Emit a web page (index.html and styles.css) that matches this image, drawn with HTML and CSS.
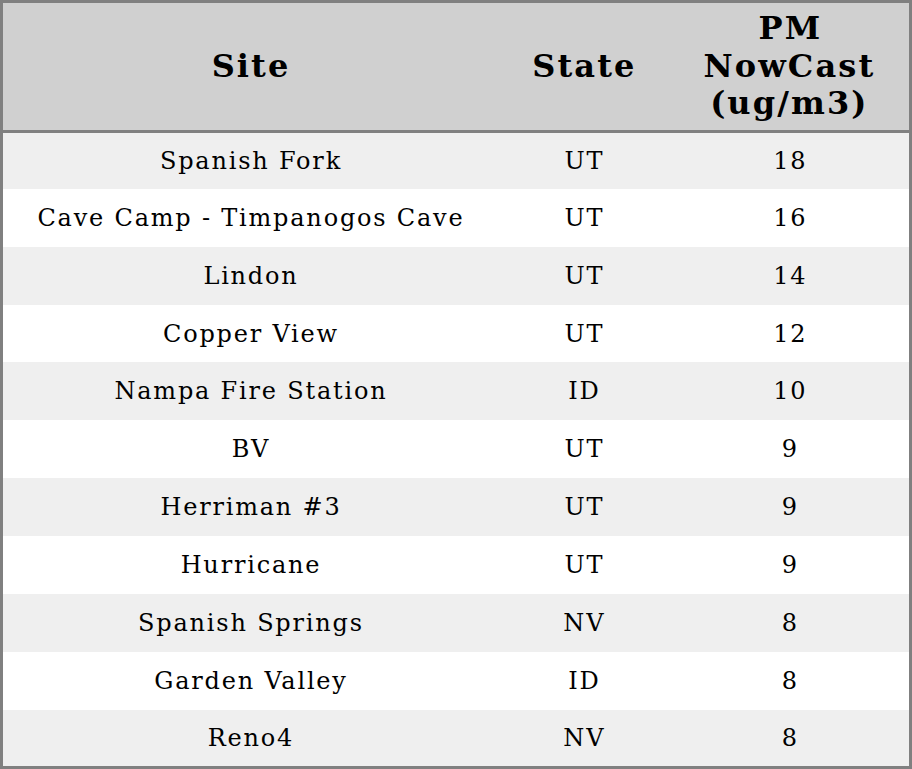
FILE: index.html
```html
<!DOCTYPE html>
<html>
<head>
<meta charset="utf-8">
<link rel="stylesheet" href="styles.css">
</head>
<body>
<table class="aq">
  <colgroup>
    <col class="c-site">
    <col class="c-state">
    <col class="c-pm">
  </colgroup>
  <thead>
    <tr class="head">
      <th>Site</th>
      <th>State</th>
      <th>PM<br>NowCast<br>(ug/m3)</th>
    </tr>
  </thead>
  <tbody>
    <tr><td>Spanish Fork</td><td>UT</td><td>18</td></tr>
    <tr><td>Cave Camp - Timpanogos Cave</td><td>UT</td><td>16</td></tr>
    <tr><td>Lindon</td><td>UT</td><td>14</td></tr>
    <tr><td>Copper View</td><td>UT</td><td>12</td></tr>
    <tr><td>Nampa Fire Station</td><td>ID</td><td>10</td></tr>
    <tr><td>BV</td><td>UT</td><td>9</td></tr>
    <tr><td>Herriman #3</td><td>UT</td><td>9</td></tr>
    <tr><td>Hurricane</td><td>UT</td><td>9</td></tr>
    <tr><td>Spanish Springs</td><td>NV</td><td>8</td></tr>
    <tr><td>Garden Valley</td><td>ID</td><td>8</td></tr>
    <tr><td>Reno4</td><td>NV</td><td>8</td></tr>
  </tbody>
</table>
</body>
</html>
```
FILE: styles.css
```css
html, body {
  margin: 0;
  padding: 0;
  background: #ffffff;
}
.aq {
  width: 912px;
  height: 769px;
  border-collapse: collapse;
  border: 3px solid #808080;
  font-family: "DejaVu Serif", serif;
  color: #000;
  table-layout: fixed;
}
.c-site { width: 494px; }
.c-state { width: 172px; }
.c-pm { width: 240px; }
.aq th {
  background: #d0d0d0;
  font-size: 32px;
  font-weight: bold;
  line-height: 37.5px;
  letter-spacing: 2.1px;
  text-indent: 2px;
  padding: 7px 0;
  text-align: center;
  border-bottom: 3px solid #808080;
}
.head { height: 125px; }
.row { height: 57.7px; }
.aq td {
  font-size: 24px;
  line-height: 28px;
  letter-spacing: 1.8px;
  text-indent: 1.8px;
  padding: 0;
  text-align: center;
  vertical-align: middle;
}
.aq tbody tr { height: 57.7px; }
.aq tbody tr:nth-child(odd) { background: #efefef; }
.aq tbody tr:nth-child(even) { background: #ffffff; }
```
